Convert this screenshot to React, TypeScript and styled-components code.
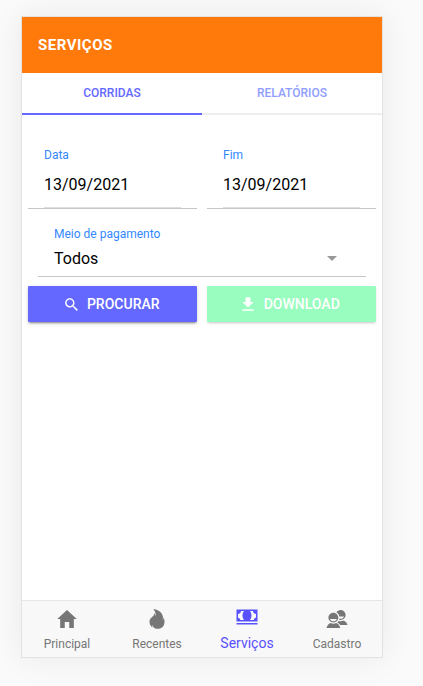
import React from "react";
import styled, { createGlobalStyle, css } from "styled-components";
import { IoMdHome, IoMdFlame, IoMdCash, IoMdContacts, IoMdSearch, IoMdDownload } from "react-icons/io";

const GlobalStyle = createGlobalStyle`
  * { box-sizing: border-box; }
  html, body, #root { height: 100%; }
  body { margin: 0; background: #fafafa; font-family: Roboto, sans-serif; overflow: hidden; }
  button { font-family: inherit; border: 0; margin: 0; cursor: pointer; }
`;

const Stage = styled.div`
  padding: 16px 0 0 21px;
`;

const Phone = styled.main`
  width: 362px;
  height: 642px;
  border: 1px solid #e2e2e2;
  background: #fff;
  display: flex;
  flex-direction: column;
  box-shadow: 0 0 30px rgba(0, 0, 0, 0.07);
`;

const Header = styled.header`
  height: 56px;
  flex: none;
  padding: 0 16px;
  display: flex;
  align-items: center;
  background: #ff790b;
  color: #fff;
  font-size: 15px;
  font-weight: 700;
  letter-spacing: 0.5px;
`;

const Segment = styled.nav`
  display: flex;
  flex: none;
`;

const SegmentButton = styled.button<{ $active?: boolean }>`
  flex: 1;
  height: 42px;
  padding: 0;
  background: transparent;
  border-bottom: 2px solid ${(p) => (p.$active ? "#6468ff" : "#eeeeee")};
  color: ${(p) => (p.$active ? "#6468ff" : "#8f9dff")};
  font-size: 12px;
  font-weight: 500;
`;

const Content = styled.section`
  flex: 1;
  padding: 26px 6px 0;
`;

const Columns = styled.div`
  display: grid;
  grid-template-columns: 169px 169px;
  gap: 10px;
`;

const DateField = styled.label`
  height: 68px;
  padding: 7px 16px 0;
  border-bottom: 1px solid #c6c6c6;
  display: flex;
  flex-direction: column;
`;

const Label = styled.span`
  color: #3388ff;
  font-size: 12px;
  line-height: 14px;
`;

const DateValue = styled.span`
  width: 137px;
  height: 46px;
  padding-top: 13px;
  border-bottom: 1px solid #dedede;
  color: #000;
  font-size: 16px;
  line-height: 20px;
`;

const SelectField = styled.div`
  height: 68px;
  margin: 0 10px 9px;
  padding: 18px 16px 0;
  border-bottom: 1px solid #c6c6c6;
`;

const SelectRow = styled.div`
  display: flex;
  align-items: center;
  justify-content: space-between;
  padding: 8px 13px 0 0;
  line-height: 20px;
  font-size: 16px;
`;

const Caret = styled.i`
  margin-top: -1px;
  border: 5px solid transparent;
  border-top-color: #999;
  border-bottom: 0;
`;

const ActionButton = styled.button<{ $tone: "primary" | "success" }>`
  height: 36px;
  padding: 0 1px 0 0;
  display: flex;
  align-items: center;
  justify-content: center;
  border-radius: 1px;
  color: #fff;
  font-size: 14px;
  font-weight: 500;

  svg {
    margin-right: 7px;
    margin-left: -1.5px;
  }

  ${(p) =>
    p.$tone === "primary"
      ? css`
          background: #6468ff;
          box-shadow: 0 2px 2px rgba(0, 0, 0, 0.14), 0 3px 1px -2px rgba(0, 0, 0, 0.2), 0 1px 5px rgba(0, 0, 0, 0.12);
        `
      : css`
          padding-right: 3px;
          background: #98fdbe;
          box-shadow: 0 2px 2px rgba(0, 0, 0, 0.06), 0 3px 1px -2px rgba(0, 0, 0, 0.08), 0 1px 5px rgba(0, 0, 0, 0.05);
        `}
`;

const TabBar = styled.nav`
  height: 57px;
  flex: none;
  display: grid;
  grid-template-columns: repeat(4, 1fr);
  border-top: 1px solid #e7e7e7;
  background: #f8f8f8;
`;

const Tab = styled.button<{ $active?: boolean }>`
  padding: ${(p) => (p.$active ? "4px" : "6px")} 0 0;
  display: flex;
  flex-direction: column;
  align-items: center;
  gap: ${(p) => (p.$active ? "6px" : "5px")};
  background: transparent;
  color: ${(p) => (p.$active ? "#5851ff" : "#767676")};
  font-size: ${(p) => (p.$active ? "14px" : "12px")};
  line-height: 16px;
`;

const tabs = [
  { name: "Principal", Icon: IoMdHome },
  { name: "Recentes", Icon: IoMdFlame },
  { name: "Serviços", Icon: IoMdCash },
  { name: "Cadastro", Icon: IoMdContacts },
];

export default function App() {
  return (
    <>
      <GlobalStyle />
      <Stage>
        <Phone>
          <Header>SERVIÇOS</Header>
          <Segment>
            <SegmentButton $active>CORRIDAS</SegmentButton>
            <SegmentButton>RELATÓRIOS</SegmentButton>
          </Segment>
          <Content>
            <Columns>
              {["Data", "Fim"].map((label) => (
                <DateField key={label}>
                  <Label>{label}</Label>
                  <DateValue>13/09/2021</DateValue>
                </DateField>
              ))}
            </Columns>
            <SelectField>
              <Label as="div">Meio de pagamento</Label>
              <SelectRow>
                Todos
                <Caret />
              </SelectRow>
            </SelectField>
            <Columns>
              <ActionButton $tone="primary">
                <IoMdSearch size={17} />
                PROCURAR
              </ActionButton>
              <ActionButton $tone="success">
                <IoMdDownload size={18} />
                DOWNLOAD
              </ActionButton>
            </Columns>
          </Content>
          <TabBar>
            {tabs.map(({ name, Icon }) => (
              <Tab key={name} $active={name === "Serviços"}>
                <Icon size={24} />
                {name}
              </Tab>
            ))}
          </TabBar>
        </Phone>
      </Stage>
    </>
  );
}
